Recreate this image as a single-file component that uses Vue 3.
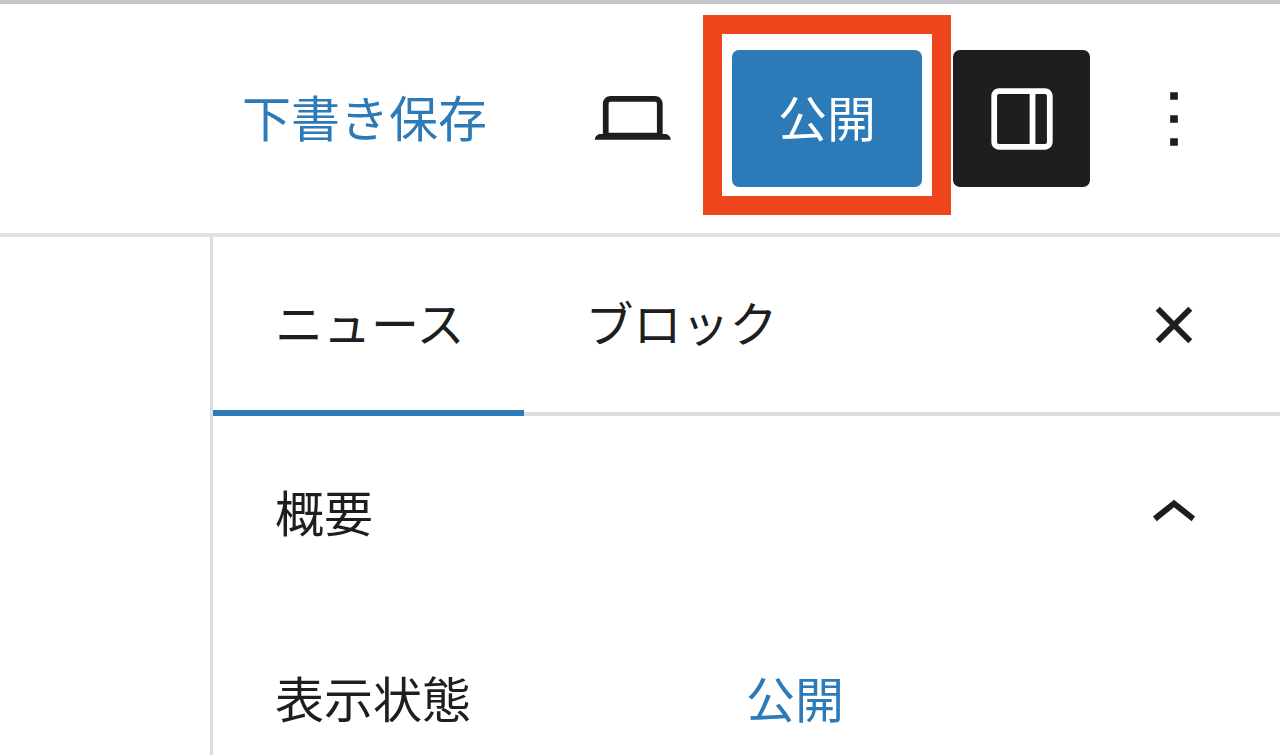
<script setup>
import { ref } from 'vue'

const activeTab = ref('news')
const panelOpen = ref(true)
const tabs = [
  { id: 'news', label: 'ニュース' },
  { id: 'block', label: 'ブロック' },
]
</script>

<template>
  <div class="editor">
    <header class="toolbar">
      <button type="button" class="save">下書き保存</button>
      <div class="actions">
        <button type="button" class="icon-button" aria-label="プレビュー">
          <svg viewBox="0 0 24 24" aria-hidden="true">
            <path d="M20.6 15.9h-.6V8c0-1.1-.9-2-2-2H6.4c-1.1 0-2 .9-2 2v7.9h-.6c-.8 0-1.5.7-1.5 1.5h19.8c0-.8-.7-1.5-1.5-1.5zM5.9 8c0-.3.2-.5.5-.5H18c.3 0 .5.2.5.5v7.6H5.9V8z" />
          </svg>
        </button>
        <div class="publish-wrap">
          <button type="button" class="publish">公開</button>
          <span class="highlight"></span>
        </div>
        <div class="settings">
          <button type="button" class="icon-button pressed" aria-label="設定" aria-pressed="true">
            <svg viewBox="0 0 24 24" aria-hidden="true">
              <path d="M18 4H6c-1.1 0-2 .9-2 2v12c0 1.1.9 2 2 2h12c1.1 0 2-.9 2-2V6c0-1.1-.9-2-2-2zm-4 14.5H6c-.3 0-.5-.2-.5-.5V6c0-.3.2-.5.5-.5h8v13zm4.5-.5c0 .3-.2.5-.5.5h-2.5v-13H18c.3 0 .5.2.5.5v12z" />
            </svg>
          </button>
          <button type="button" class="icon-button" aria-label="オプション">
            <svg viewBox="0 0 24 24" aria-hidden="true">
              <path d="M13 19h-2v-2h2v2zm0-6h-2v-2h2v2zm0-6h-2V5h2v2z" />
            </svg>
          </button>
        </div>
      </div>
    </header>

    <div class="body">
      <main class="canvas"></main>
      <aside class="sidebar">
        <div class="tab-bar">
          <div class="tabs" role="tablist">
            <button
              v-for="tab in tabs"
              :key="tab.id"
              type="button"
              role="tab"
              class="tab"
              :class="{ active: activeTab === tab.id }"
              :aria-selected="activeTab === tab.id"
              @click="activeTab = tab.id"
            >{{ tab.label }}</button>
          </div>
          <button type="button" class="icon-button" aria-label="設定を閉じる">
            <svg viewBox="0 0 24 24" aria-hidden="true">
              <path d="M12 13.06l3.712 3.713 1.061-1.06L13.061 12l3.712-3.712-1.06-1.06L12 10.938 8.288 7.227l-1.061 1.06L10.939 12l-3.712 3.712 1.06 1.061L12 13.061z" />
            </svg>
          </button>
        </div>
        <section>
          <button type="button" class="panel-title" :aria-expanded="panelOpen" @click="panelOpen = !panelOpen">
            <span>概要</span>
            <svg viewBox="0 0 24 24" aria-hidden="true">
              <path d="M6.5 12.4L12 8l5.5 4.4-.9 1.2L12 10l-4.5 3.6-1-1.2z" />
            </svg>
          </button>
          <div v-if="panelOpen" class="row">
            <span>表示状態</span>
            <a href="#">公開</a>
          </div>
        </section>
      </aside>
    </div>
  </div>
</template>

<style>
body {
  margin: 0;
  background: #fff;
}
</style>

<style scoped>
.editor {
  display: flex;
  flex-direction: column;
  box-sizing: border-box;
  min-height: 100vh;
  border-top: 4px solid #c5c6c8;
  background: #fff;
  color: #1e1e1e;
  font-family: "Noto Sans CJK JP", sans-serif;
  font-size: 49px;
  line-height: 60px;
}

button {
  margin: 0;
  padding: 0;
  border: 0;
  background: none;
  color: inherit;
  font: inherit;
  cursor: pointer;
}

svg {
  display: block;
  flex: none;
  width: 92px;
  height: 92px;
  fill: currentColor;
}

.toolbar {
  display: flex;
  align-items: center;
  justify-content: flex-end;
  gap: 31px;
  padding: 46px 38px 46px 0;
  border-bottom: 4px solid #e0e0e0;
}

.save {
  padding: 0 46px 6px;
  color: #2c7bb8;
}

.actions {
  display: flex;
  gap: 31px;
}

.settings {
  display: flex;
  gap: 15px;
}

.icon-button {
  display: flex;
  flex: none;
  align-items: center;
  justify-content: center;
  width: 137px;
  height: 137px;
  border-radius: 7px;
}

.pressed {
  background: #1e1e1e;
  color: #fff;
}

.publish-wrap {
  position: relative;
}

.publish {
  height: 137px;
  padding: 0 46px 6px;
  border-radius: 7px;
  background: #2c7bb8;
  color: #fff;
}

.highlight {
  position: absolute;
  inset: -35px -29px -28px;
  border: 19px solid #ee451c;
  pointer-events: none;
}

.body {
  display: flex;
  flex: 1;
}

.canvas {
  flex: 1;
}

.sidebar {
  flex: none;
  width: 1067px;
  border-left: 3px solid #dddddd;
}

.tab-bar {
  display: flex;
  align-items: center;
  justify-content: space-between;
  padding: 0 38px 4px 0;
  box-shadow: inset 0 -4px #dddddd;
}

.tabs {
  display: flex;
  margin-bottom: -4px;
}

.tab {
  height: 179px;
  padding: 0 59px 12px 62px;
  font-size: 48px;
}

.tab.active {
  box-shadow: inset 0 -6px #2c7bb8;
}

.panel-title {
  display: flex;
  align-items: center;
  justify-content: space-between;
  width: 100%;
  padding: 53px 60px 53px 62px;
}

.panel-title span {
  padding-bottom: 8px;
}

.row {
  display: grid;
  grid-template-columns: 471px 1fr;
  padding: 53px 60px 0 62px;
}

a {
  color: #2c7bb8;
  text-decoration: none;
}
</style>
